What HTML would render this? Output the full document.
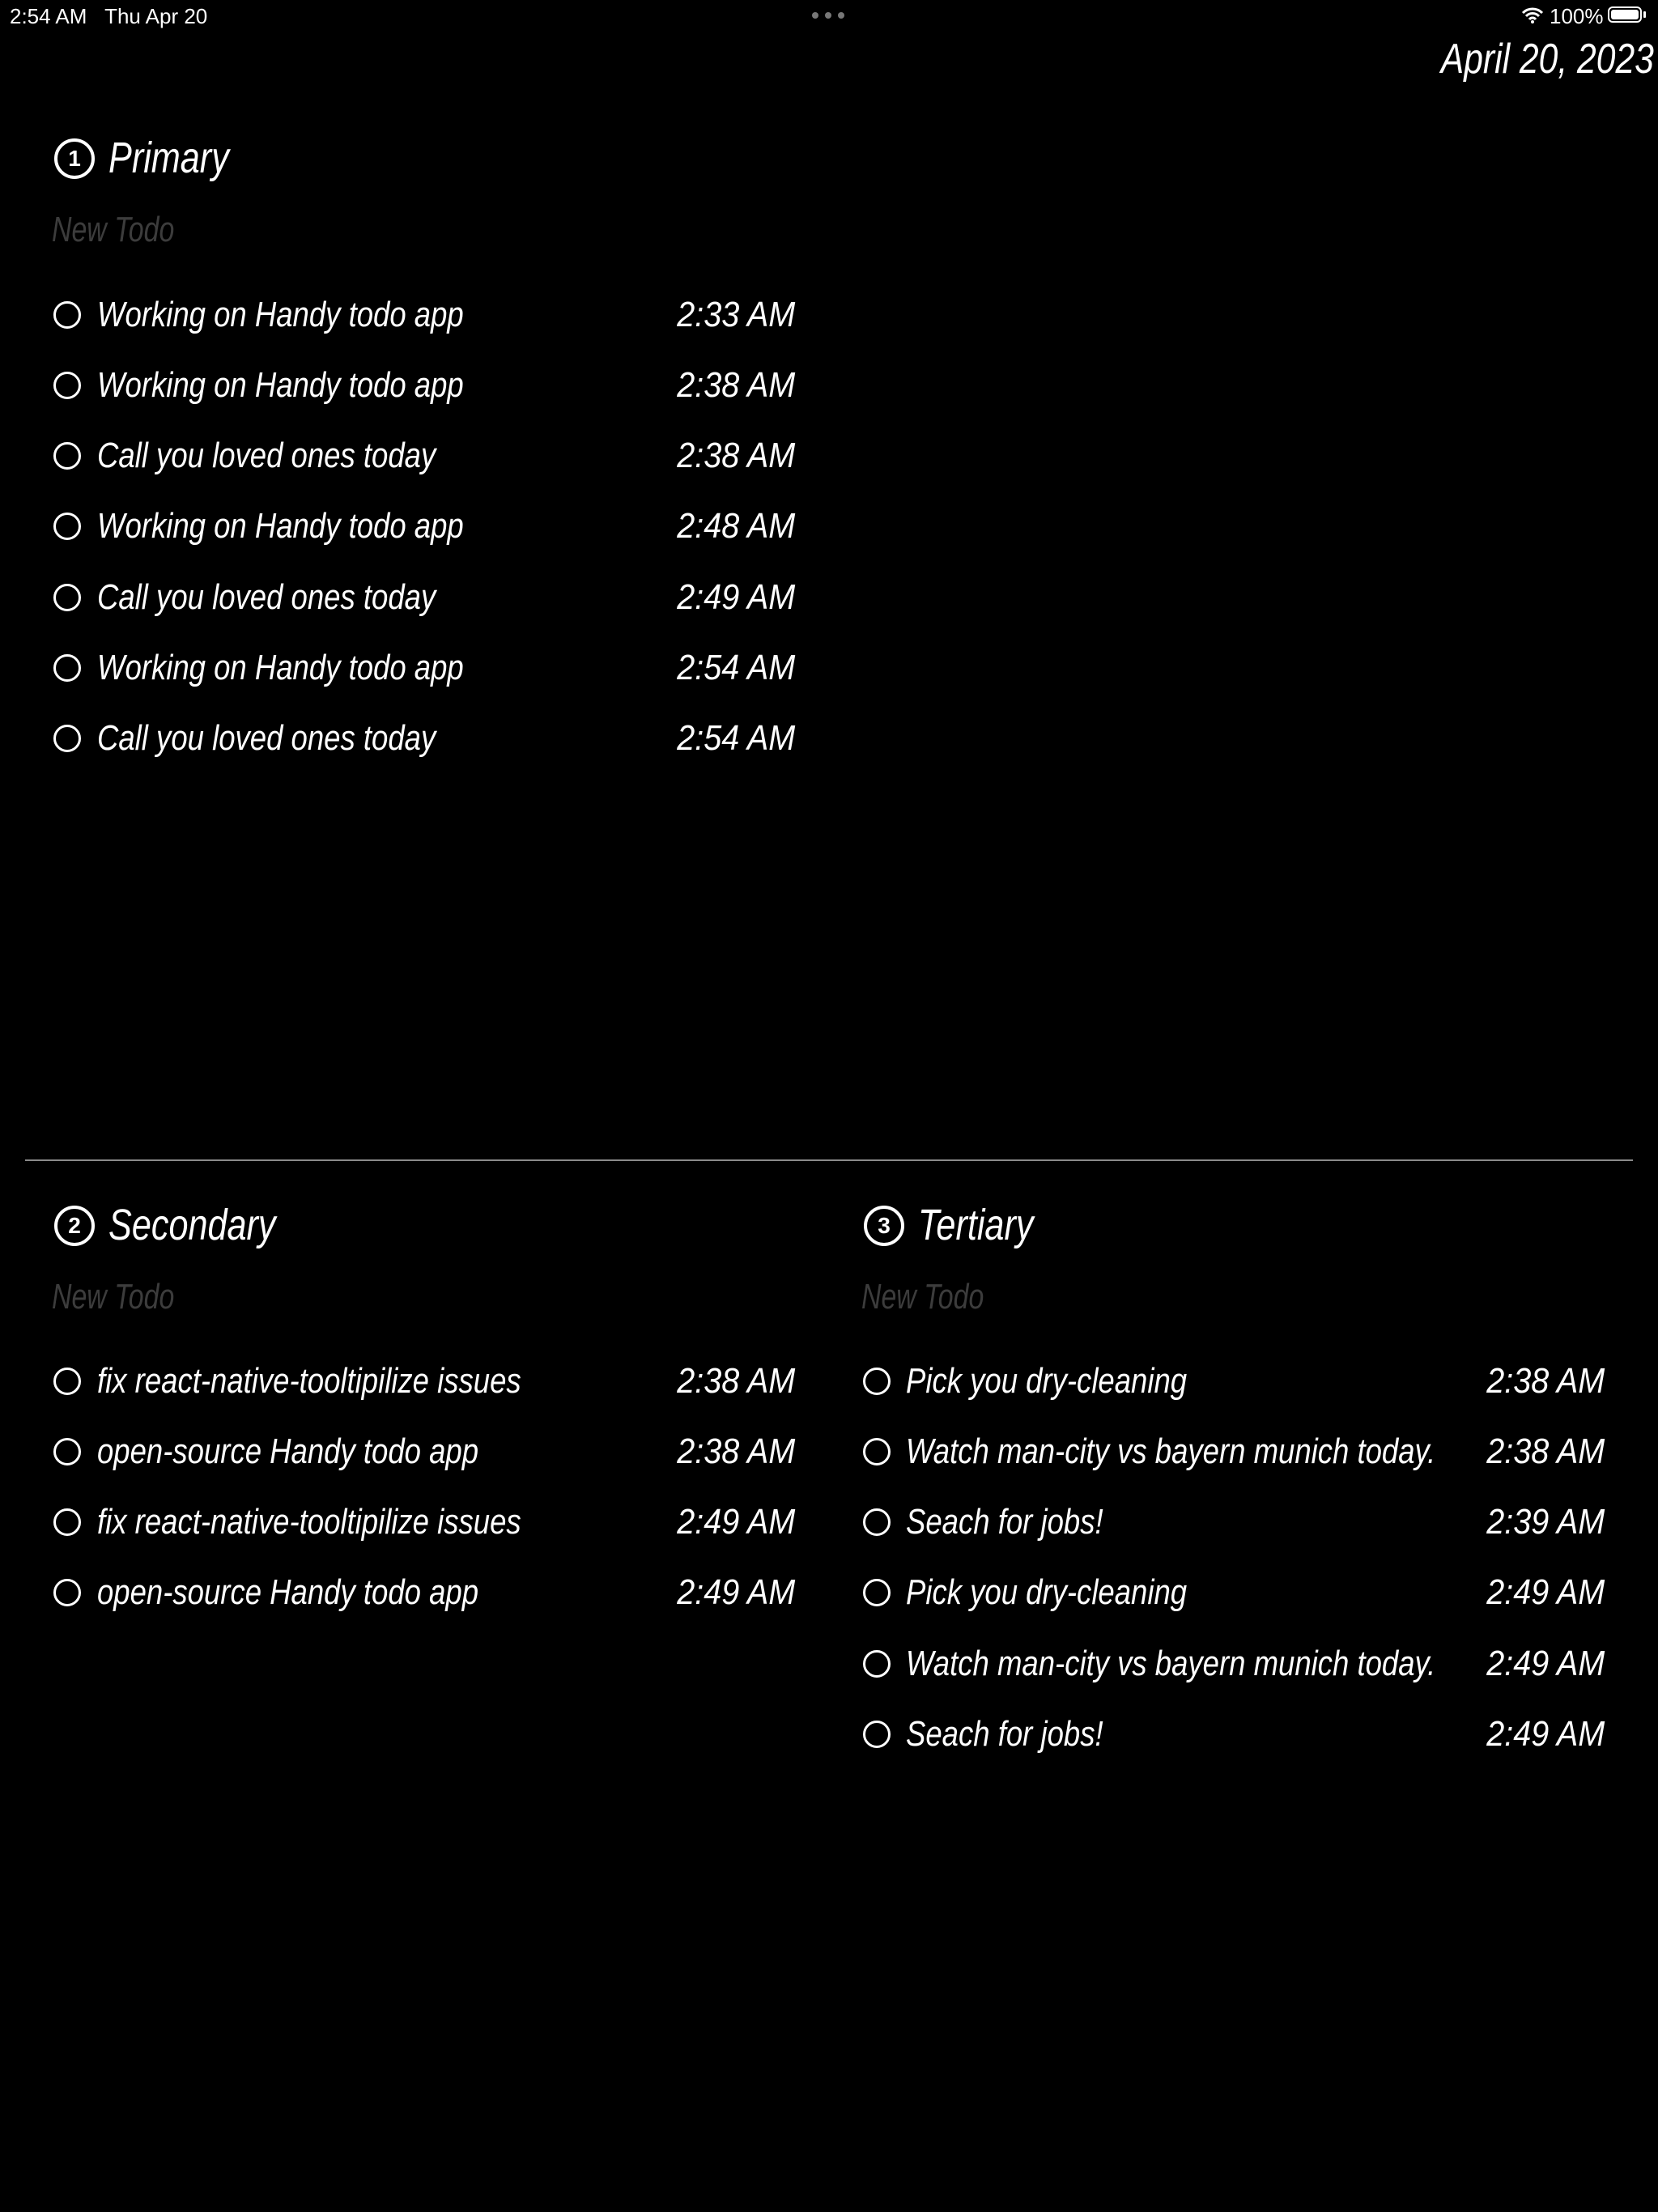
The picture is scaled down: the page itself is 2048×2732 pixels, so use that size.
<!DOCTYPE html>
<html><head><meta charset="utf-8"><style>
body{margin:0;width:2048px;height:2732px;background:#000;position:relative;overflow:hidden;color:#fff;font-family:"Liberation Sans",sans-serif;}
.a{position:absolute;white-space:nowrap;line-height:60px;height:60px;}
.ti{font-size:54px;font-style:italic;transform:scaleX(0.8);transform-origin:left center;}
.nt{font-size:44px;font-style:italic;color:#3c3c3c;transform:scaleX(0.77);transform-origin:left center;}
.it{font-size:44px;font-style:italic;transform:scaleX(0.83);transform-origin:left center;}
.tm{font-size:44px;font-style:italic;text-align:right;transform:scaleX(0.9);transform-origin:right center;}
.c{position:absolute;width:28px;height:28px;border:3px solid #fff;border-radius:50%;}
.n{position:absolute;width:42px;height:42px;border:4px solid #fff;border-radius:50%;font:600 28px "Liberation Sans",sans-serif;text-align:center;line-height:42px;}
</style></head><body>
<div class="a" style="left:12px;top:-10px;font:26px 'Liberation Sans',sans-serif;line-height:60px">2:54 AM&nbsp;&nbsp;&nbsp;Thu Apr 20</div>
<div style="position:absolute;left:1003px;top:15px;width:8px;height:8px;border-radius:50%;background:#777"></div>
<div style="position:absolute;left:1019px;top:15px;width:8px;height:8px;border-radius:50%;background:#777"></div>
<div style="position:absolute;left:1035px;top:15px;width:8px;height:8px;border-radius:50%;background:#777"></div>
<svg style="position:absolute;left:1878px;top:8px" width="30" height="22" viewBox="0 0 30 22"><path d="M3 8a17 17 0 0 1 24 0M7 12a11 11 0 0 1 16 0M11 16a5 5 0 0 1 8 0" stroke="#fff" stroke-width="3" fill="none"/><circle cx="15" cy="19" r="2" fill="#fff"/></svg>
<div class="a" style="left:1914px;top:-10px;font:26px 'Liberation Sans',sans-serif;line-height:60px">100%</div>
<div style="position:absolute;left:1986px;top:8px;width:42px;height:20px;border:2px solid #fff;border-radius:6px;box-sizing:border-box;padding:2px"><div style="width:100%;height:100%;background:#fff;border-radius:3px"></div></div>
<div style="position:absolute;left:2030px;top:14px;width:3px;height:8px;background:#fff;border-radius:1px"></div>
<div class="a" style="right:5px;top:43px;font-size:52px;font-style:italic;transform:scaleX(0.82);transform-origin:right center">April 20, 2023</div>

<div class="n" style="left:67px;top:171px">1</div>
<div class="a ti" style="left:134px;top:165px">Primary</div>
<div class="a nt" style="left:64px;top:254px">New Todo</div>

<div class="n" style="left:67px;top:1489px">2</div>
<div class="a ti" style="left:134px;top:1483px">Secondary</div>
<div class="a nt" style="left:64px;top:1572px">New Todo</div>

<div class="n" style="left:1067px;top:1489px">3</div>
<div class="a ti" style="left:1134px;top:1483px">Tertiary</div>
<div class="a nt" style="left:1064px;top:1572px">New Todo</div>

<div style="position:absolute;left:31px;top:1432px;width:1986px;height:2px;background:#8a8a8a"></div>

<div class="c" style="left:66px;top:372px"></div><div class="a it" style="left:120px;top:359px">Working on Handy todo app</div><div class="a tm" style="right:1066px;top:359px">2:33 AM</div>
<div class="c" style="left:66px;top:459px"></div><div class="a it" style="left:120px;top:446px">Working on Handy todo app</div><div class="a tm" style="right:1066px;top:446px">2:38 AM</div>
<div class="c" style="left:66px;top:546px"></div><div class="a it" style="left:120px;top:533px">Call you loved ones today</div><div class="a tm" style="right:1066px;top:533px">2:38 AM</div>
<div class="c" style="left:66px;top:633px"></div><div class="a it" style="left:120px;top:620px">Working on Handy todo app</div><div class="a tm" style="right:1066px;top:620px">2:48 AM</div>
<div class="c" style="left:66px;top:721px"></div><div class="a it" style="left:120px;top:708px">Call you loved ones today</div><div class="a tm" style="right:1066px;top:708px">2:49 AM</div>
<div class="c" style="left:66px;top:808px"></div><div class="a it" style="left:120px;top:795px">Working on Handy todo app</div><div class="a tm" style="right:1066px;top:795px">2:54 AM</div>
<div class="c" style="left:66px;top:895px"></div><div class="a it" style="left:120px;top:882px">Call you loved ones today</div><div class="a tm" style="right:1066px;top:882px">2:54 AM</div>

<div class="c" style="left:66px;top:1689px"></div><div class="a it" style="left:120px;top:1676px">fix react-native-tooltipilize issues</div><div class="a tm" style="right:1066px;top:1676px">2:38 AM</div>
<div class="c" style="left:66px;top:1776px"></div><div class="a it" style="left:120px;top:1763px">open-source Handy todo app</div><div class="a tm" style="right:1066px;top:1763px">2:38 AM</div>
<div class="c" style="left:66px;top:1863px"></div><div class="a it" style="left:120px;top:1850px">fix react-native-tooltipilize issues</div><div class="a tm" style="right:1066px;top:1850px">2:49 AM</div>
<div class="c" style="left:66px;top:1950px"></div><div class="a it" style="left:120px;top:1937px">open-source Handy todo app</div><div class="a tm" style="right:1066px;top:1937px">2:49 AM</div>

<div class="c" style="left:1066px;top:1689px"></div><div class="a it" style="left:1119px;top:1676px">Pick you dry-cleaning</div><div class="a tm" style="right:66px;top:1676px">2:38 AM</div>
<div class="c" style="left:1066px;top:1776px"></div><div class="a it" style="left:1119px;top:1763px">Watch man-city vs bayern munich today.</div><div class="a tm" style="right:66px;top:1763px">2:38 AM</div>
<div class="c" style="left:1066px;top:1863px"></div><div class="a it" style="left:1119px;top:1850px">Seach for jobs!</div><div class="a tm" style="right:66px;top:1850px">2:39 AM</div>
<div class="c" style="left:1066px;top:1950px"></div><div class="a it" style="left:1119px;top:1937px">Pick you dry-cleaning</div><div class="a tm" style="right:66px;top:1937px">2:49 AM</div>
<div class="c" style="left:1066px;top:2038px"></div><div class="a it" style="left:1119px;top:2025px">Watch man-city vs bayern munich today.</div><div class="a tm" style="right:66px;top:2025px">2:49 AM</div>
<div class="c" style="left:1066px;top:2125px"></div><div class="a it" style="left:1119px;top:2112px">Seach for jobs!</div><div class="a tm" style="right:66px;top:2112px">2:49 AM</div>
</body></html>
